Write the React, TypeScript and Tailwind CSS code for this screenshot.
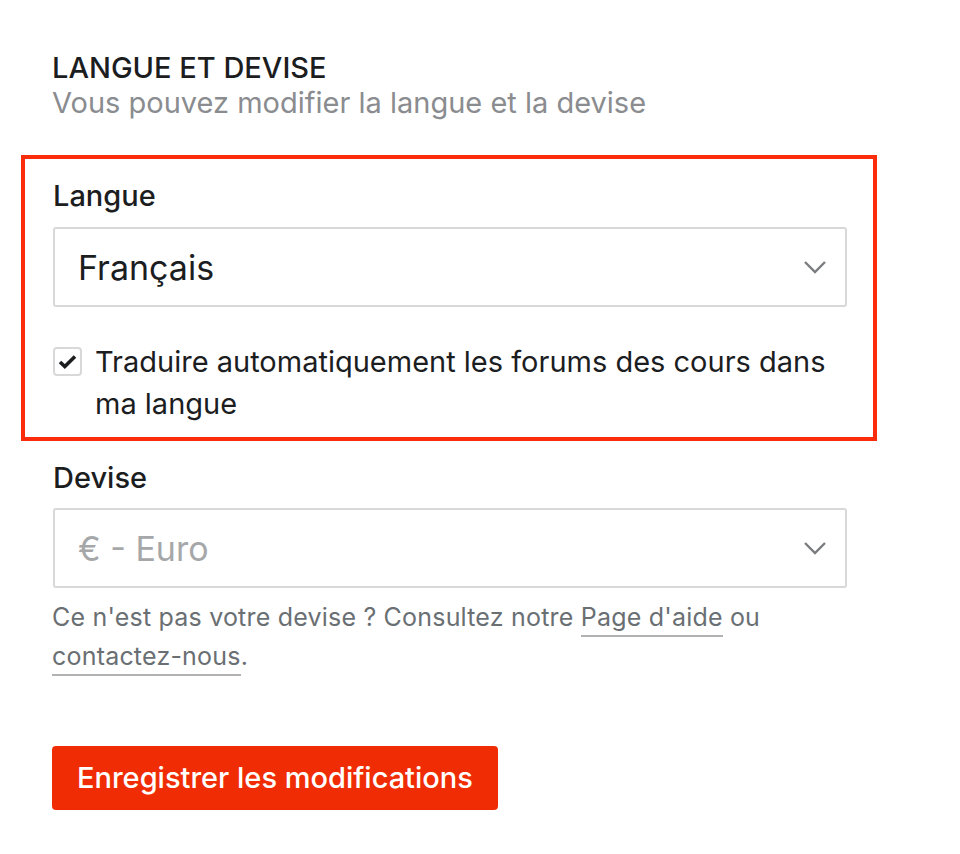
export default function App() {
  return (
    <div className="min-h-screen bg-white font-['Inter',sans-serif] text-[#1c1d1f]">
      <div className="ml-[21px] w-[856px] pt-[50px]">
        {/* Section header */}
        <div className="px-[31px]">
          <h2 className="text-[29px] leading-[35px] font-medium">LANGUE ET DEVISE</h2>
          <p className="text-[29px] leading-[35px] text-[#8a8c8f]">
            Vous pouvez modifier la langue et la devise
          </p>
        </div>

        {/* Highlighted language block */}
        <div className="mt-[35px] border-4 border-[#fb2c0c] pl-[28px] pr-[26px] pt-[20px] pb-[12px]">
          <label className="block text-[29px] leading-[34px] font-medium">Langue</label>
          <div className="mt-[14px] flex h-[80px] items-center justify-between rounded-[3px] border-2 border-[#d8d8d8] pl-[23px] pr-[18px]">
            <span className="text-[34px]">Français</span>
            <svg width="24" height="14" viewBox="0 0 24 14" fill="none">
              <path d="M2 2l10 10L22 2" stroke="#7a7c7f" strokeWidth="2.4" />
            </svg>
          </div>
          <div className="mt-[34px] flex items-start gap-[13px]">
            <div className="mt-[6px] flex h-[29px] w-[29px] shrink-0 items-center justify-center rounded-[4px] border-2 border-[#d8d8d8]">
              <svg width="19" height="15" viewBox="0 0 19 15" fill="none">
                <path d="M2 8l4.8 4.5L17 2.5" stroke="#1c1d1f" strokeWidth="3.6" />
              </svg>
            </div>
            <p className="text-[29px] leading-[42px]">
              Traduire automatiquement les forums des cours dans ma langue
            </p>
          </div>
        </div>

        {/* Currency */}
        <div className="pl-[32px] pr-[30px] pt-[20px]">
          <label className="block text-[29px] leading-[34px] font-medium">Devise</label>
          <div className="mt-[13px] flex h-[80px] items-center justify-between rounded-[3px] border-2 border-[#d8d8d8] pl-[23px] pr-[18px]">
            <span className="text-[34px] text-[#a6a7a9]">€ - Euro</span>
            <svg width="24" height="14" viewBox="0 0 24 14" fill="none">
              <path d="M2 2l10 10L22 2" stroke="#7a7c7f" strokeWidth="2.4" />
            </svg>
          </div>
          <p className="-ml-px mt-[10px] text-[25px] leading-[39px] tracking-[0.2px] text-[#6a6f73]">
            Ce n'est pas votre devise ? Consultez notre{" "}
            <a className="border-b-2 border-[#b0b2b4] pb-[3px]">Page d'aide</a> ou{" "}
            <a className="border-b-2 border-[#b0b2b4] pb-[3px]">contactez-nous</a>.
          </p>

          <button className="-ml-px mt-[70px] h-[64px] rounded-[4px] bg-[#f02c04] px-[25px] text-[29px] font-medium text-white">
            Enregistrer les modifications
          </button>
        </div>
      </div>
    </div>
  );
}
